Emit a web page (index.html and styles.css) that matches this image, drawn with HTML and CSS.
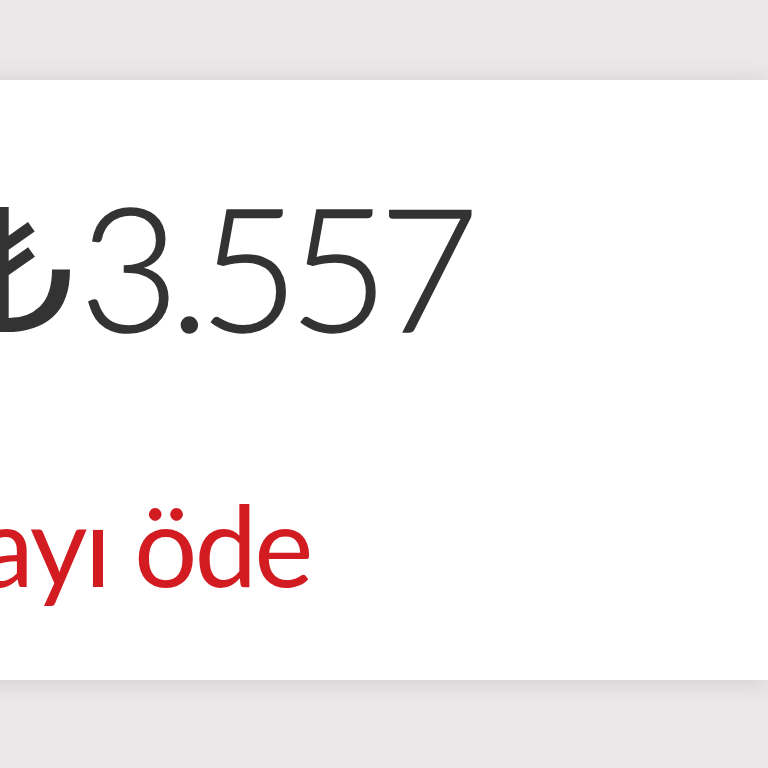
FILE: index.html
```html
<!DOCTYPE html>
<html lang="tr">
<head>
    <meta charset="UTF-8">
    <meta name="viewport" content="width=device-width, initial-scale=1.0">
    <link rel="stylesheet" href="styles.css">
    <title>Ödeme</title>
</head>
<body>
    <div class="page">
        <div class="card">
            <div class="amount"><span class="currency">₺</span>3.557</div>
            <div class="pay-link">Bu ayı öde</div>
        </div>
    </div>
</body>
</html>
```

FILE: styles.css
```css
body {
    margin: 0;
    background: #ebe8e9;
    font-family: "Lato", "Open Sans", sans-serif;
    overflow: hidden;
    height: 768px;
}

.page {
    padding-top: 80px;
}

.card {
    background-color: #ffffff;
    height: 600px;
    width: 1068px;
    margin-left: -300px;
    box-shadow: 0 2px 24px rgba(0, 0, 0, 0.12);
    display: flex;
    flex-direction: column;
    box-sizing: border-box;
}

.amount {
    padding-left: 265px;
    margin-top: 100px;
    font-family: "Lato", "Open Sans", sans-serif;
    font-weight: 300;
    font-size: 172px;
    line-height: 172px;
    letter-spacing: -10px;
    color: #333333;
    -webkit-text-stroke: 1.5px #333333;
}

.currency {
    font-family: "DejaVu Sans", sans-serif;
    font-weight: 400;
    letter-spacing: 0;
    margin-right: 5px;
    -webkit-text-stroke: 0;
}

.pay-link {
    padding-left: 125px;
    margin-top: 130px;
    font-size: 112px;
    line-height: 110px;
    letter-spacing: -3px;
    color: #d21c22;
}
```
